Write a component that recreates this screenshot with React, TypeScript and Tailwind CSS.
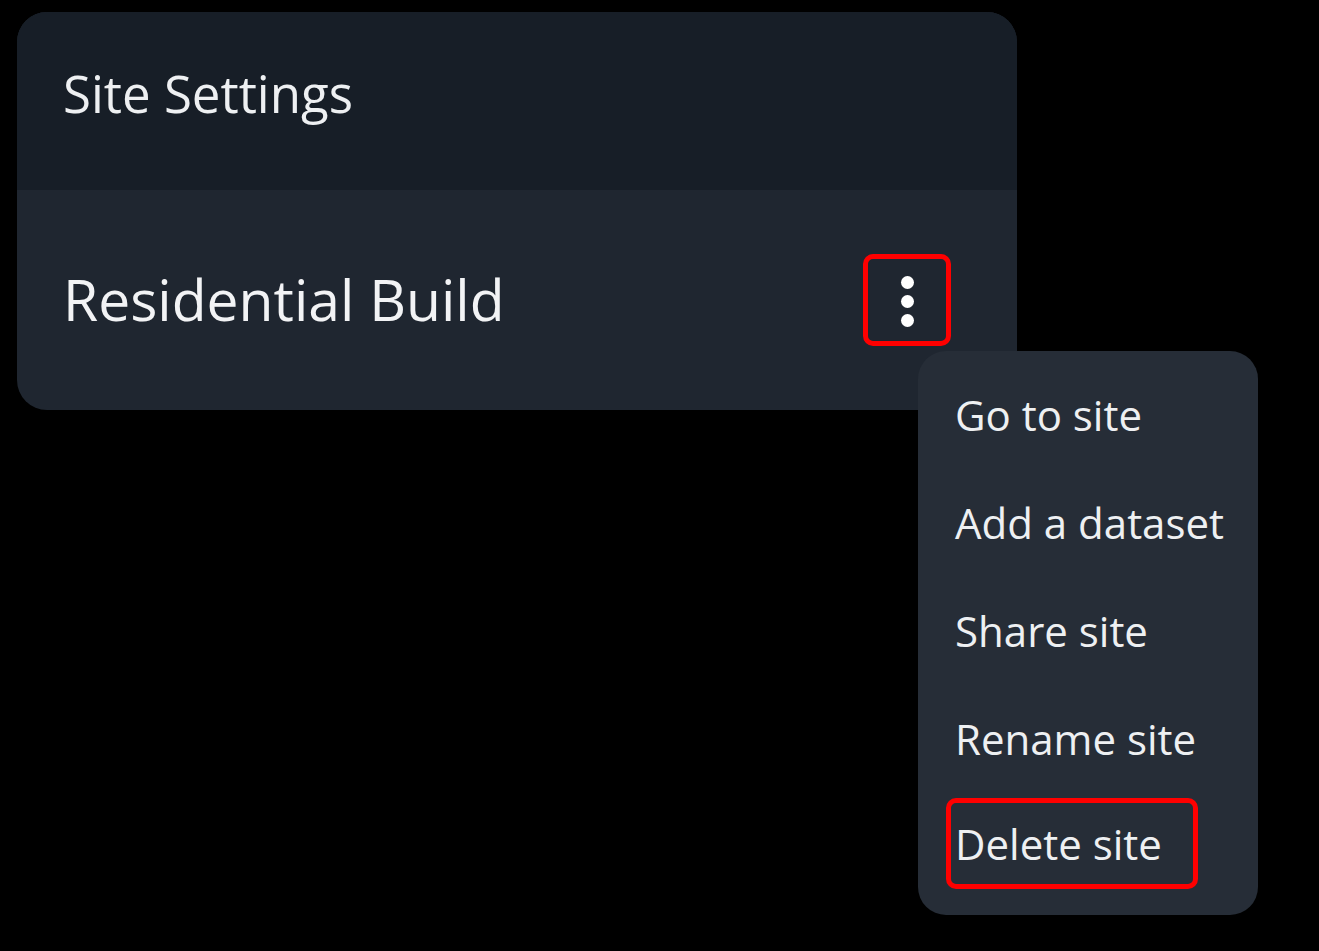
import React from "react";

const items = ["Go to site", "Add a dataset", "Share site", "Rename site", "Delete site"];

export default function App() {
  return (
    <div
      className="min-h-screen bg-black pl-[17px] pt-[12px]"
      style={{ fontFamily: "'Open Sans', 'Noto Sans', sans-serif" }}
    >
      <div className="relative w-[1000px]">
        {/* card */}
        <div className="overflow-hidden rounded-[30px] bg-[#1f2630]">
          <div className="flex h-[178px] items-center bg-[#171e27] px-[46px] pb-[16px]">
            <span className="text-[51px] text-[#eef0f2]">Site Settings</span>
          </div>
          <div className="flex h-[220px] items-center justify-between pl-[46px] pr-[66px]">
            <span className="text-[57px] text-[#f2f3f5]">Residential Build</span>
            <button className="flex h-[92px] w-[88px] flex-col items-center justify-center gap-[6px] rounded-[10px] border-[5px] border-[#ff0000] pt-[2px]">
              <span className="h-[13px] w-[13px] rounded-full bg-white" />
              <span className="h-[13px] w-[13px] rounded-full bg-white" />
              <span className="h-[13px] w-[13px] rounded-full bg-white" />
            </button>
          </div>
        </div>

        {/* dropdown menu */}
        <div className="absolute left-[901px] top-[339px] flex w-[340px] flex-col rounded-[28px] bg-[#262d37] px-[28px] pt-[9px] pb-[26px]">
          {items.map((label) => (
            <div
              key={label}
              className={
                label === "Delete site"
                  ? "mt-[6px] flex h-[91px] w-[252px] items-center rounded-[10px] border-[5px] border-[#ff0000] pl-[4px] text-[42px] text-[#eef0f2]"
                  : "flex h-[108px] items-center pl-[9px] text-[42px] text-[#eef0f2]"
              }
            >
              {label}
            </div>
          ))}
        </div>
      </div>
    </div>
  );
}
